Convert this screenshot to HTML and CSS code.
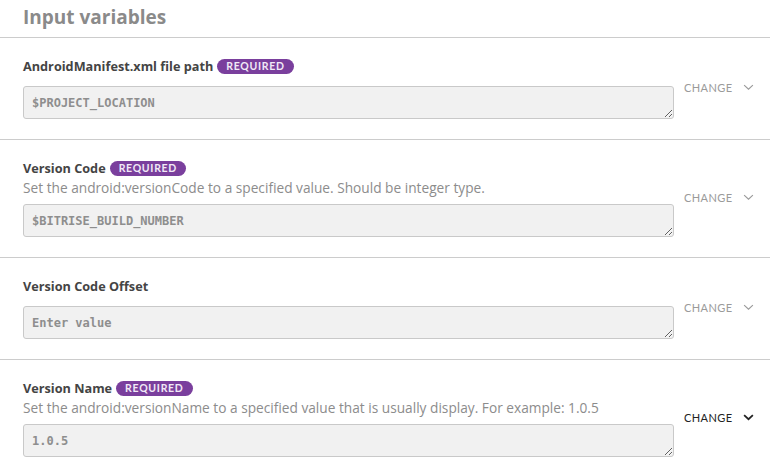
FILE: index.html
```html
<!DOCTYPE html>
<html>
<head>
<meta charset="utf-8">
<link rel="stylesheet" href="styles.css">
</head>
<body>
<div class="panel">
  <h2 class="panel-title">Input variables</h2>

  <div class="field">
    <div class="field-main">
      <div class="field-label">AndroidManifest.xml file path <span class="badge">REQUIRED</span></div>
      <textarea class="field-input" rows="1">$PROJECT_LOCATION</textarea>
    </div>
    <button class="change">CHANGE <svg class="chev" viewBox="0 0 12 8" width="11" height="7"><path d="M1 1.2 L6 6 L11 1.2" fill="none" stroke="currentColor" stroke-width="1.3"/></svg></button>
  </div>

  <div class="field">
    <div class="field-main">
      <div class="field-label">Version Code <span class="badge">REQUIRED</span></div>
      <div class="field-desc">Set the android:versionCode to a specified value. Should be integer type.</div>
      <textarea class="field-input" rows="1">$BITRISE_BUILD_NUMBER</textarea>
    </div>
    <button class="change">CHANGE <svg class="chev" viewBox="0 0 12 8" width="11" height="7"><path d="M1 1.2 L6 6 L11 1.2" fill="none" stroke="currentColor" stroke-width="1.3"/></svg></button>
  </div>

  <div class="field">
    <div class="field-main">
      <div class="field-label">Version Code Offset</div>
      <textarea class="field-input" rows="1" placeholder="Enter value"></textarea>
    </div>
    <button class="change">CHANGE <svg class="chev" viewBox="0 0 12 8" width="11" height="7"><path d="M1 1.2 L6 6 L11 1.2" fill="none" stroke="currentColor" stroke-width="1.3"/></svg></button>
  </div>

  <div class="field">
    <div class="field-main">
      <div class="field-label">Version Name <span class="badge">REQUIRED</span></div>
      <div class="field-desc">Set the android:versionName to a specified value that is usually display. For example: 1.0.5</div>
      <textarea class="field-input" rows="1">1.0.5</textarea>
    </div>
    <button class="change change-active">CHANGE <svg class="chev" viewBox="0 0 12 8" width="11" height="7"><path d="M1 1.2 L6 6 L11 1.2" fill="none" stroke="currentColor" stroke-width="2"/></svg></button>
  </div>
</div>
</body>
</html>
```

FILE: styles.css
```css
* { box-sizing: border-box; }
html, body {
  margin: 0;
  padding: 0;
  background: #ffffff;
  font-family: "Open Sans", "Lato", sans-serif;
}
.panel {
  width: 770px;
}
.panel-title {
  margin: 0;
  padding: 4px 23px 0;
  height: 38px;
  font-size: 19px;
  line-height: 26px;
  font-weight: 700;
  color: #8a8a8a;
  border-bottom: 1px solid #cccccc;
}
.field {
  display: flex;
  align-items: center;
  padding: 18px 0 20px 23px;
  border-bottom: 1px solid #cccccc;
}
.field-main {
  width: 651px;
  display: flex;
  flex-direction: column;
}
.field-label {
  font-size: 12.7px;
  line-height: 20px;
  font-weight: 700;
  color: #444444;
  display: flex;
  align-items: center;
  gap: 4px;
}
.badge {
  display: inline-block;
  height: 15px;
  line-height: 15px;
  padding: 0 9px;
  border-radius: 8px;
  background: #7a3f9d;
  color: #f1e9f6;
  font-family: "Lato", sans-serif;
  font-size: 10.5px;
  font-weight: 700;
  letter-spacing: 0.7px;
}
.field-desc {
  font-size: 13.7px;
  line-height: 20px;
  color: #8c8c8c;
}
.field-input {
  display: block;
  width: 651px;
  height: 33px;
  margin: 10px 0 0;
  padding: 8px 8px;
  background: #f1f1f1;
  border: 1px solid #c9c9c9;
  border-radius: 3px;
  font-family: "DejaVu Sans Mono", monospace;
  font-size: 12px;
  font-weight: 700;
  line-height: 16px;
  color: #8e8e8e;
  resize: vertical;
  overflow: hidden;
}
.field-input::placeholder {
  color: #8e8e8e;
}
.field-desc + .field-input {
  margin-top: 6px;
}
.change {
  display: flex;
  align-items: center;
  gap: 11px;
  margin-left: 10px;
  padding: 0;
  background: none;
  border: none;
  font-family: "Lato", "Open Sans", sans-serif;
  font-size: 11px;
  letter-spacing: 0.4px;
  color: #9a9a9a;
  cursor: pointer;
}
.change-active {
  color: #222222;
}
```
